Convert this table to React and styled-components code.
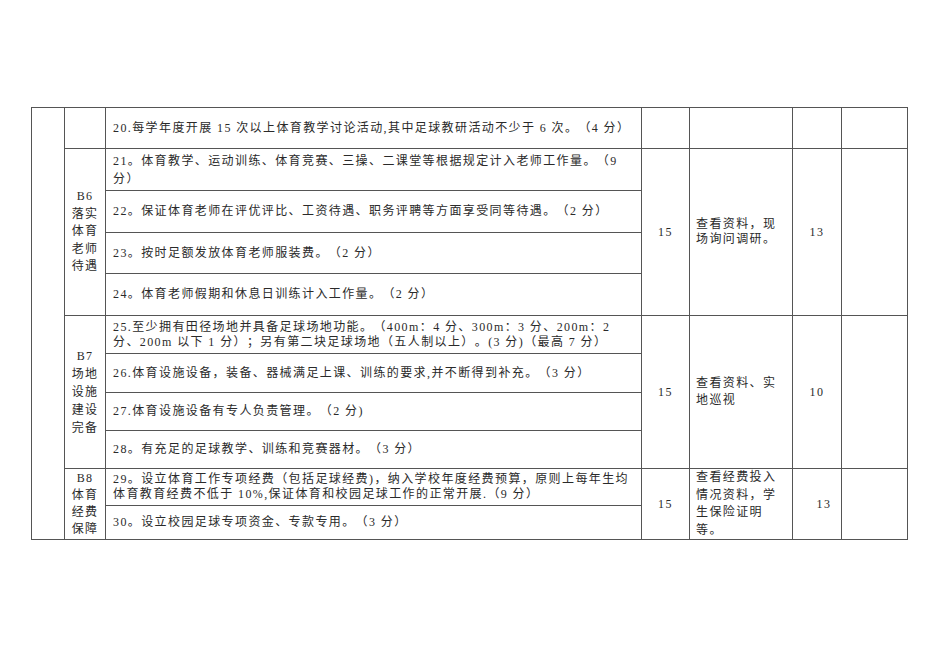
import React from "react";
import styled, { createGlobalStyle } from "styled-components";

const GlobalStyle = createGlobalStyle`
  html, body {
    margin: 0;
    padding: 0;
    background: #ffffff;
  }
  body {
    font-family: "Liberation Serif", "Noto Sans CJK SC", serif;
    color: #2a2a2a;
    text-spacing-trim: space-all;
  }
`;

const Page = styled.div`
  width: 950px;
  height: 672px;
  padding: 107px 0 0 31px;
  box-sizing: border-box;
`;

const Sheet = styled.table`
  border-collapse: collapse;
  table-layout: fixed;
  width: 877px;
  font-size: 12px;
  letter-spacing: 1.4px;
`;

const Row = styled.tr`
  height: ${(p) => p.$h}px;
`;

const Cell = styled.td`
  border: 1px solid #555555;
  padding: 0;
  vertical-align: middle;
  text-align: ${(p) => p.$align || "left"};
  line-height: ${(p) => p.$lh || 17}px;
`;

const Label = styled(Cell)`
  text-align: center;
  letter-spacing: 1.2px;
`;

const Item = styled(Cell)`
  padding-left: 7px;
  white-space: nowrap;
  overflow: hidden;
`;

const Method = styled(Cell)`
  padding-left: 6px;
  white-space: nowrap;
`;

const Num = styled(Cell)`
  text-align: center;
  padding-left: ${(p) => p.$shift || 0}px;
`;

const Line = styled.div`
  display: block;
`;

const widths = [33, 41, 536, 48, 103, 49, 66];

const groups = [
  {
    label: [],
    score: "",
    method: [],
    got: "",
    items: [
      {
        h: 41,
        lines: [
          "20.每学年度开展 15 次以上体育教学讨论活动,其中足球教研活动不少于 6 次。（4 分）",
        ],
      },
    ],
  },
  {
    label: ["B6", "落实", "体育", "老师", "待遇"],
    labelLh: 17.5,
    score: "15",
    method: ["查看资料，现", "场询问调研。"],
    methodLh: 15,
    got: "13",
    items: [
      {
        h: 42,
        lh: 18,
        lines: [
          "21。体育教学、运动训练、体育竞赛、三操、二课堂等根据规定计入老师工作量。（9",
          "分）",
        ],
      },
      {
        h: 42,
        lines: ["22。保证体育老师在评优评比、工资待遇、职务评聘等方面享受同等待遇。（2 分）"],
      },
      { h: 41, lines: ["23。按时足额发放体育老师服装费。（2 分）"] },
      { h: 42, lines: ["24。体育老师假期和休息日训练计入工作量。（2 分）"] },
    ],
  },
  {
    label: ["B7", "场地", "设施", "建设", "完备"],
    labelLh: 18,
    score: "15",
    method: ["查看资料、实", "地巡视"],
    methodLh: 17,
    got: "10",
    items: [
      {
        h: 38,
        lh: 15,
        lines: [
          "25.至少拥有田径场地并具备足球场地功能。（400m：4 分、300m：3 分、200m：2",
          "分、200m 以下 1 分）；另有第二块足球场地（五人制以上）。(3 分)（最高 7 分）",
        ],
      },
      {
        h: 39,
        lines: ["26.体育设施设备，装备、器械满足上课、训练的要求,并不断得到补充。（3 分）"],
      },
      { h: 38, lines: ["27.体育设施设备有专人负责管理。（2 分)"] },
      { h: 38, lines: ["28。有充足的足球教学、训练和竞赛器材。（3 分）"] },
    ],
  },
  {
    label: ["B8", "体育", "经费", "保障"],
    labelLh: 17,
    score: "15",
    method: ["查看经费投入", "情况资料，学", "生保险证明", "等。"],
    methodLh: 17.5,
    got: "13",
    gotShift: 14,
    items: [
      {
        h: 37,
        lh: 15,
        lines: [
          "29。设立体育工作专项经费（包括足球经费)，纳入学校年度经费预算，原则上每年生均",
          "体育教育经费不低于 10%,保证体育和校园足球工作的正常开展.（9 分）",
        ],
      },
      { h: 34, lines: ["30。设立校园足球专项资金、专款专用。（3 分）"] },
    ],
  },
];

const totalRows = groups.reduce((n, g) => n + g.items.length, 0);

const Lines = ({ lines }) =>
  lines.map((t, i) => <Line key={i}>{t}</Line>);

export default function App() {
  return (
    <Page>
      <GlobalStyle />
      <Sheet>
        <colgroup>
          {widths.map((w, i) => (
            <col key={i} style={{ width: w }} />
          ))}
        </colgroup>
        <tbody>
          {groups.map((g, gi) =>
            g.items.map((item, ii) => {
              const span = g.items.length;
              return (
                <Row key={`${gi}-${ii}`} $h={item.h}>
                  {gi === 0 && ii === 0 && <Cell rowSpan={totalRows} />}
                  {ii === 0 && (
                    <Label rowSpan={span} $lh={g.labelLh}>
                      <Lines lines={g.label} />
                    </Label>
                  )}
                  <Item $lh={item.lh}>
                    <Lines lines={item.lines} />
                  </Item>
                  {ii === 0 && (
                    <>
                      <Num rowSpan={span}>{g.score}</Num>
                      <Method rowSpan={span} $lh={g.methodLh}>
                        <Lines lines={g.method} />
                      </Method>
                      <Num rowSpan={span} $shift={g.gotShift}>
                        {g.got}
                      </Num>
                      <Cell rowSpan={span} />
                    </>
                  )}
                </Row>
              );
            })
          )}
        </tbody>
      </Sheet>
    </Page>
  );
}
